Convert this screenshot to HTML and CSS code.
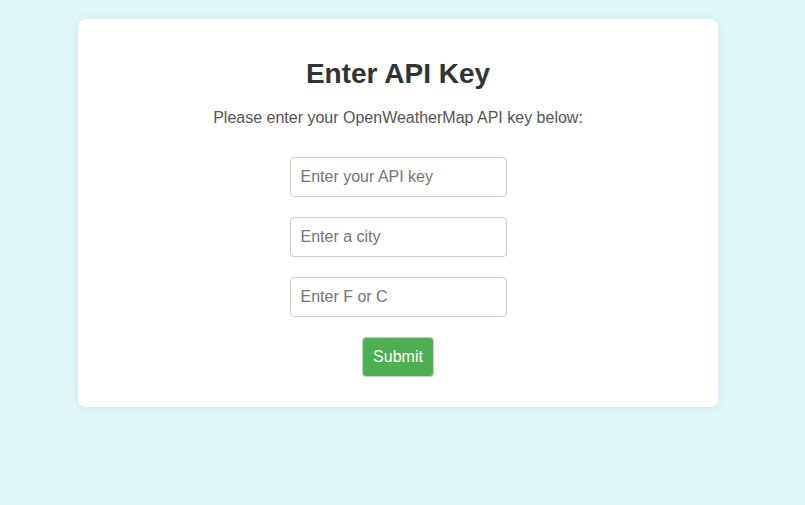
FILE: index.html
```html
<!DOCTYPE html>
<html lang="en">
<head>
<meta charset="utf-8">
<title>Enter API Key</title>
<link rel="stylesheet" href="styles.css">
</head>
<body>
<main class="card">
  <h1 class="title">Enter API Key</h1>
  <p class="lead">Please enter your OpenWeatherMap API key below:</p>
  <form class="form">
    <input class="field" type="text" placeholder="Enter your API key">
    <input class="field" type="text" placeholder="Enter a city">
    <input class="field" type="text" placeholder="Enter F or C">
    <button class="submit" type="button">Submit</button>
  </form>
</main>
</body>
</html>
```

FILE: styles.css
```css
html, body {
  margin: 0;
  background: #e0f7fa;
}
body {
  font-family: "Liberation Sans", Arial, sans-serif;
  padding: 19px 87px 0 78px;
  min-height: 505px;
  box-sizing: border-box;
}
.card {
  width: 640px;
  box-sizing: border-box;
  background: #fff;
  border-radius: 8px;
  box-shadow: 0 0 10px rgba(0, 0, 0, 0.08);
  padding: 39px 20px 30px;
  text-align: center;
}
.title {
  margin: 0 0 20px;
  font-size: 28px;
  line-height: 31px;
  font-weight: bold;
  color: #333;
}
.lead {
  margin: 0 0 30px;
  font-size: 16px;
  line-height: 18px;
  color: #555;
}
.form {
  display: flex;
  flex-direction: column;
  align-items: center;
  gap: 20px;
}
.field {
  width: 217px;
  height: 40px;
  box-sizing: border-box;
  padding: 0 10px;
  border: 1px solid #ccc;
  border-radius: 4px;
  font-family: "Liberation Sans", Arial, sans-serif;
  font-size: 16px;
  color: #333;
  background: #fff;
  outline: none;
}
.field::placeholder {
  color: #757575;
}
.submit {
  width: 72px;
  height: 40px;
  box-sizing: border-box;
  border: 1px solid #ccc;
  border-radius: 4px;
  background: #4caf50;
  color: #fff;
  font-family: "Liberation Sans", Arial, sans-serif;
  font-size: 16px;
  padding: 0;
  cursor: pointer;
}
```
